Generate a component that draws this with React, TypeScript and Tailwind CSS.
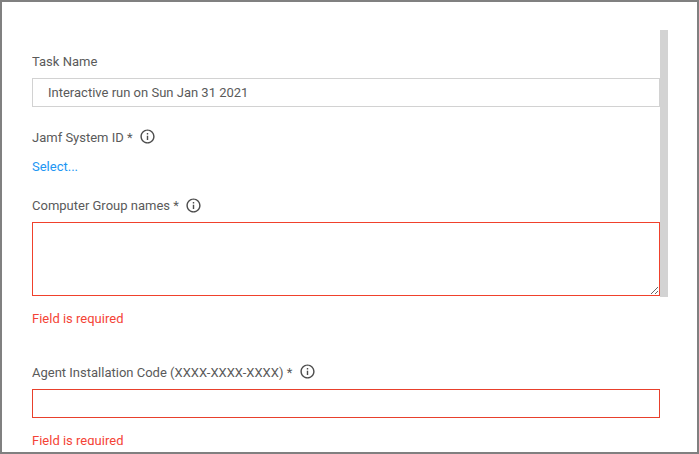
import React from "react";

function Info({ className }: { className: string }) {
  return (
    <svg className={`-ml-px h-[17px] w-[17px] shrink-0 ${className}`} viewBox="0 0 24 24" fill="#4c4c4c">
      <path d="M11 7h2v2h-2zm0 4h2v6h-2zm1-9C6.480 2 2 6.480 2 12s4.480 10 10 10 10-4.480 10-10S17.520 2 12 2zm0 18c-4.410 0-8-3.590-8-8s3.590-8 8-8 8 3.590 8 8-3.590 8-8 8z" />
    </svg>
  );
}

function Label({ text, info }: { text: string; info?: string }) {
  return (
    <div className="flex h-4 items-center gap-[7.5px]">
      <span className="whitespace-pre">{text}</span>
      {info && <Info className={info} />}
    </div>
  );
}

export default function App() {
  return (
    <div className="flex h-[454px] w-[699px] border-2 border-[#808080] bg-white pt-7 pb-[7px] pl-[30px] font-[Roboto,sans-serif] text-[13px] leading-4 text-[#5a5a5a]">
      <div className="w-[628px] shrink-0 overflow-hidden pt-6">
        <Label text="Task Name" />
        <div className="mt-2 flex h-[29px] items-center border border-[#d2d2d2] pl-[15px]">Interactive run on Sun Jan 31 2021</div>
        <div className="mt-[23px]"><Label text="Jamf System ID *" info="-mt-1" /></div>
        <div className="mt-[13px] text-[#2196f3]">Select...</div>
        <div className="mt-[23px]"><Label text="Computer Group names *" info="-mt-0.5" /></div>
        <textarea className="mt-2 block h-[74px] w-full resize border border-[#f0412c] outline-none" />
        <div className="mt-[15px] text-[#f44336]">Field is required</div>
        <div className="mt-[38px]"><Label text="Agent Installation Code (XXXX-XXXX-XXXX) *" info="-mt-1" /></div>
        <div className="mt-2 h-[29px] border border-[#e8402c]" />
        <div className="mt-[15px] text-[#f44336]">Field is required</div>
      </div>
      <div className="h-[267px] w-2 bg-[#d3d3d3]" />
    </div>
  );
}
